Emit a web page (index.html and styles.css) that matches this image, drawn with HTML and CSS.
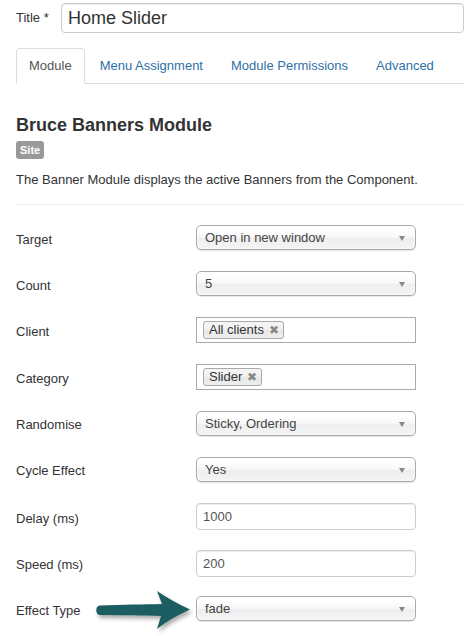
FILE: index.html
```html
<!DOCTYPE html>
<html>
<head>
<meta charset="utf-8">
<link rel="stylesheet" href="styles.css">
</head>
<body>
<div class="page">
  <div class="title-row">
    <label class="title-label">Title *</label>
    <div class="title-input">Home Slider</div>
  </div>

  <ul class="tabs">
    <li class="tab active">Module</li>
    <li class="tab">Menu Assignment</li>
    <li class="tab">Module Permissions</li>
    <li class="tab">Advanced</li>
  </ul>

  <h2 class="heading">Bruce Banners Module</h2>
  <span class="badge">Site</span>
  <p class="desc">The Banner Module displays the active Banners from the Component.</p>
  <hr class="rule">

  <div class="fields">
    <div class="field"><span class="label">Target</span><div class="select">Open in new window<span class="caret"></span></div></div>
    <div class="field"><span class="label">Count</span><div class="select">5<span class="caret"></span></div></div>
    <div class="field"><span class="label">Client</span><div class="multi"><span class="tag">All clients <span class="x">✖</span></span></div></div>
    <div class="field"><span class="label">Category</span><div class="multi"><span class="tag">Slider <span class="x">✖</span></span></div></div>
    <div class="field"><span class="label">Randomise</span><div class="select">Sticky, Ordering<span class="caret"></span></div></div>
    <div class="field"><span class="label">Cycle Effect</span><div class="select">Yes<span class="caret"></span></div></div>
    <div class="field tall"><span class="label">Delay (ms)</span><div class="text">1000</div></div>
    <div class="field tall"><span class="label">Speed (ms)</span><div class="text">200</div></div>
    <div class="field"><span class="label">Effect Type</span><div class="select">fade<span class="caret"></span></div></div>
  </div>

  <svg class="arrow" width="104" height="48" viewBox="0 0 104 48">
    <defs>
      <filter id="sh" x="-20%" y="-30%" width="140%" height="170%">
        <feDropShadow dx="2" dy="3" stdDeviation="2" flood-color="#000" flood-opacity="0.35"/>
      </filter>
    </defs>
    <path filter="url(#sh)" fill="#1b5d62" d="M6 17.5 C30 16.5 50 16.5 68 16 L63 3 C73 10 84 16 96 21.5 C84 27 73 33 63 41 L67 28 C50 27.5 30 27.5 6 27 C1 27 1 17.5 6 17.5 Z"/>
  </svg>
</div>
</body>
</html>
```

FILE: styles.css
```css
html, body {
  margin: 0;
  padding: 0;
  background: #fff;
  overflow: hidden;
}
.page {
  position: relative;
  width: 464px;
  height: 636px;
  overflow: hidden;
  padding: 3px 0 0 16px;
  box-sizing: border-box;
  font-family: "Liberation Sans", Arial, sans-serif;
  font-size: 13px;
  color: #333;
}
.title-row {
  display: flex;
  align-items: flex-start;
}
.title-label {
  width: 47px;
  padding-top: 7px;
  font-size: 13px;
}
.title-input {
  width: 420px;
  height: 30px;
  box-sizing: border-box;
  border: 1px solid #ccc;
  border-radius: 4px;
  padding: 0 6px;
  font-size: 18px;
  line-height: 28px;
  color: #333;
  box-shadow: inset 0 1px 1px rgba(0,0,0,0.075);
}
.tabs {
  list-style: none;
  margin: 15px 0 0 0;
  padding: 0;
  display: flex;
  border-bottom: 1px solid #ddd;
  height: 35px;
  width: 470px;
}
.tab {
  padding: 0 12px;
  line-height: 33px;
  margin-right: 2px;
  border: 1px solid transparent;
  border-radius: 4px 4px 0 0;
  color: #3071a9;
}
.tab.active {
  color: #555;
  border-color: #ddd #ddd transparent #ddd;
  background: #fff;
  height: 34px;
}
.heading {
  margin: 30px 0 0 0;
  font-size: 18px;
  font-weight: bold;
  line-height: 22px;
  color: #333;
}
.badge {
  display: inline-block;
  margin-top: 5px;
  background: #999;
  color: #fff;
  font-weight: bold;
  font-size: 11px;
  line-height: 18px;
  height: 18px;
  padding: 0 4px;
  border-radius: 3px;
}
.desc {
  margin: 12px 0 0 0;
  line-height: 18px;
}
.rule {
  margin: 15px 0 0 0;
  border: 0;
  border-top: 1px solid #eee;
  width: 460px;
}
.fields {
  margin-top: 20px;
}
.field {
  display: flex;
  align-items: center;
  height: 25px;
  margin-bottom: 21.4px;
}
.field.tall {
  height: 27px;
  margin-bottom: 19.4px;
}
.label {
  width: 180px;
  padding-top: 3px;
}
.select {
  position: relative;
  width: 220px;
  height: 25px;
  box-sizing: border-box;
  border: 1px solid #aaa;
  border-radius: 5px;
  background: linear-gradient(#fff 20%, #f6f6f6 50%, #eee 52%, #f4f4f4 100%);
  box-shadow: 0 0 3px #fff inset, 0 1px 1px rgba(0,0,0,0.1);
  padding-left: 8px;
  line-height: 23px;
  color: #444;
}
.caret {
  position: absolute;
  right: 10px;
  top: 10px;
  width: 0;
  height: 0;
  border-left: 3.5px solid transparent;
  border-right: 3.5px solid transparent;
  border-top: 5px solid #888;
}
.multi {
  width: 220px;
  height: 26px;
  box-sizing: border-box;
  border: 1px solid #aaa;
  background: #fff;
  padding: 3px 0 0 6px;
}
.tag {
  display: inline-block;
  height: 18px;
  box-sizing: border-box;
  line-height: 16px;
  padding: 0 4px 0 5px;
  border: 1px solid #aaa;
  border-radius: 3px;
  background: linear-gradient(#f4f4f4 20%, #f0f0f0 50%, #e8e8e8 52%, #eee 100%);
  color: #333;
}
.x {
  color: #888;
  font-size: 12px;
  margin-left: 1px;
}
.text {
  width: 220px;
  height: 27px;
  box-sizing: border-box;
  border: 1px solid #ccc;
  border-radius: 4px;
  padding-left: 6px;
  line-height: 25px;
  color: #555;
  box-shadow: inset 0 1px 1px rgba(0,0,0,0.075);
}
.arrow {
  position: absolute;
  left: 94px;
  top: 588px;
}
```
